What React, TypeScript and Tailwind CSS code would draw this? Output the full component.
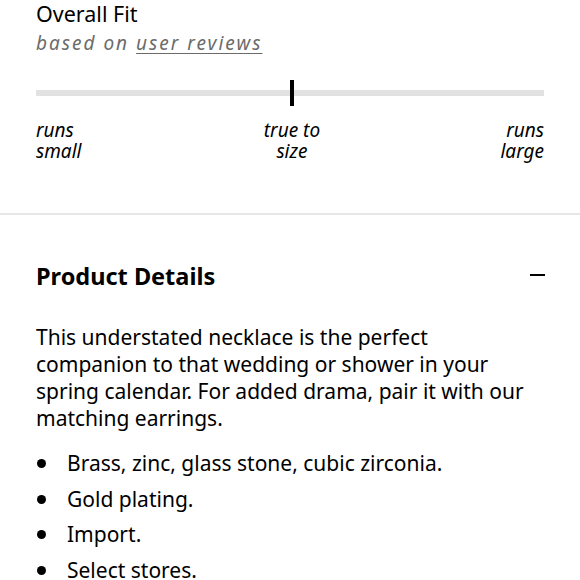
export default function App() {
  const bullets = ["Brass, zinc, glass stone, cubic zirconia.", "Gold plating.", "Import.", "Select stores."]
  return (
    <div className="w-[580px] h-[580px] overflow-hidden bg-white text-black" style={{ fontFamily: "'Noto Sans', 'Open Sans', sans-serif" }}>
      <div className="px-9">
        <div className="text-[21.5px] leading-[28px] pt-0">Overall Fit</div>
        <div className="text-[19px] leading-[28px] italic tracking-[2px] text-[#6b6b6b] mt-[1px]">
          based on <span className="underline underline-offset-[3px]">user reviews</span>
        </div>
        <div className="relative mt-[23px] h-[26px] flex items-center">
          <div className="w-full h-[6px] bg-[#e2e2e2]" />
          <div className="absolute left-[254px] top-0 w-[4px] h-[26px] bg-black" />
        </div>
        <div className="mt-[14px] flex justify-between text-[19px] leading-[21px] italic">
          <div>runs<br />small</div>
          <div className="text-center pl-[2px]">true to<br />size</div>
          <div className="text-right">runs<br />large</div>
        </div>
      </div>
      <div className="mt-[51px] h-[2px] bg-[#e6e6e6]" />
      <div className="px-9">
        <div className="mt-[46px] flex items-center justify-between">
          <h2 className="text-[23.5px] leading-[30px] font-bold">Product Details</h2>
          <div className="w-[15px] h-[2px] bg-black mr-[-1px] mt-[-3px]" />
        </div>
        <p className="mt-[33px] text-[21px] leading-[27px]">
          This understated necklace is the perfect<br />
          companion to that wedding or shower in your<br />
          spring calendar. For added drama, pair it with our<br />
          matching earrings.
        </p>
        <ul className="mt-[18px] flex flex-col gap-[8px]">
          {bullets.map((b) => (
            <li key={b} className="flex items-center text-[21px] leading-[27.5px]">
              <span className="w-[9px] h-[9px] rounded-full bg-black ml-[1px] mr-[21px]" />
              {b}
            </li>
          ))}
        </ul>
      </div>
    </div>
  )
}
